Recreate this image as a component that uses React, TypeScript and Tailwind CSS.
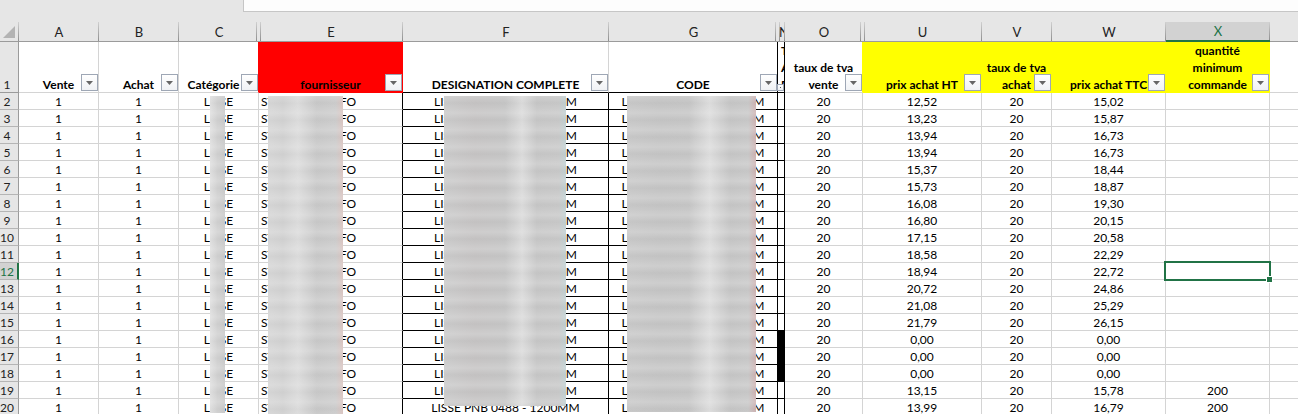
import clsx from 'clsx';

type Column = {
  letter: string;
  title?: string;
  width: string;
  head?: string;
  body?: string;
  hiddenNext?: boolean;
};

const columns: Column[] = [
  { letter: 'A', title: 'Vente', width: 'w-[80px]' },
  { letter: 'B', title: 'Achat', width: 'w-[80px]' },
  { letter: 'C', title: 'Catégorie', width: 'w-[80px]', head: 'border-r-[#ff0000] pr-[10px]', hiddenNext: true },
  { letter: 'E', title: 'fournisseur', width: 'w-[144px]', head: 'bg-[#ff0000] border-[#ff0000]', body: 'border-r-black' },
  { letter: 'F', title: 'DESIGNATION COMPLETE', width: 'w-[206px]', head: 'border-b-black', body: 'border-black' },
  { letter: 'G', title: 'CODE', width: 'w-[169px]', head: 'border-black', body: 'border-black', hiddenNext: true },
  { letter: 'N', title: 'T\nA\nD', width: 'w-[7px]', head: 'border-black', body: 'border-black' },
  { letter: 'O', title: 'taux de tva\nvente', width: 'w-[78px]', head: 'border-r-[#ffff00]', hiddenNext: true },
  { letter: 'U', title: 'prix achat HT', width: 'w-[119px]', head: 'bg-[#ffff00] border-[#ffff00]' },
  { letter: 'V', title: 'taux de tva\nachat', width: 'w-[70px]', head: 'bg-[#ffff00] border-[#ffff00]' },
  { letter: 'W', title: 'prix achat TTC', width: 'w-[114px]', head: 'bg-[#ffff00] border-[#ffff00]' },
  { letter: 'X', title: 'quantité\nminimum\ncommande', width: 'w-[104px]', head: 'bg-[#ffff00] border-[#ffff00]' },
  { letter: '', width: 'w-auto', head: 'border-r-0', body: 'border-r-0' },
];

const prices = [
  { ht: '12,52', ttc: '15,02' },
  { ht: '13,23', ttc: '15,87' },
  { ht: '13,94', ttc: '16,73' },
  { ht: '13,94', ttc: '16,73' },
  { ht: '15,37', ttc: '18,44' },
  { ht: '15,73', ttc: '18,87' },
  { ht: '16,08', ttc: '19,30' },
  { ht: '16,80', ttc: '20,15' },
  { ht: '17,15', ttc: '20,58' },
  { ht: '18,58', ttc: '22,29' },
  { ht: '18,94', ttc: '22,72' },
  { ht: '20,72', ttc: '24,86' },
  { ht: '21,08', ttc: '25,29' },
  { ht: '21,79', ttc: '26,15' },
  { ht: '0,00', ttc: '0,00' },
  { ht: '0,00', ttc: '0,00' },
  { ht: '0,00', ttc: '0,00' },
  { ht: '13,15', ttc: '15,78', min: '200' },
  { ht: '13,99', ttc: '16,79', min: '200', name: 'LISSE PNB 0488 - 1200MM' },
];

// smudge drawn over the private part of a column, starting in its first row
const masks: Record<string, string> = {
  C: 'left-[31px] w-[15px] h-[317px] bg-[linear-gradient(to_right,#dedede,#cecece_50%,#c6c6c6)]',
  E: 'left-[9px] w-[75px] h-[318px] bg-[linear-gradient(to_right,#d4d4d4,#cfcfcf_20%,#dadada_40%,#c6c6c6_65%,#cacaca_90%,#d8c2be)]',
  F: 'left-[41px] w-[122px] h-[310px] bg-[linear-gradient(to_right,#c8c8c8,#c3c1c1_25%,#c3c3c3_50%,#d9d9d9_64%,#c4c4c4_76%,#c6c6c6_94%,#bccdcf)]',
  G: 'left-[18px] w-[129px] h-[316px] bg-[linear-gradient(to_right,#c6c6c6,#c2c2c2_25%,#c3c3c3_48%,#dbdbdb_64%,#c3c3c3_80%,#c6c6c6_94%,#cbaeae)]',
};

function Mask({ letter }: { letter: string }) {
  return (
    <div className={clsx('absolute top-[3px] z-10', masks[letter])}>
      <div className="h-full bg-[repeating-linear-gradient(to_bottom,rgba(255,255,255,0.2)_0px,rgba(255,255,255,0)_7px,rgba(255,255,255,0.2)_17px)]" />
    </div>
  );
}

function FilterButton({ label, small }: { label: string; small?: boolean }) {
  return (
    <button
      type="button"
      aria-label={`Filtrer ${label}`}
      className={clsx(
        'absolute right-0 bottom-px flex items-center justify-center border border-[#9ea7b5] bg-linear-to-b from-white to-[#f0f2f5]',
        small ? 'size-[7px]' : 'size-[17px]',
      )}
    >
      {small ? (
        <span className="size-px bg-[#555]" />
      ) : (
        <svg width="7" height="4" viewBox="0 0 7 4">
          <path d="M0 0h7L3.5 4z" fill="#666" />
        </svg>
      )}
    </button>
  );
}

function Separator({ className }: { className: string }) {
  return <span className={clsx('absolute inset-y-0 w-px bg-linear-to-b from-[#d0d0d0] to-[#8f8f8f]', className)} />;
}

function cellContent(letter: string, row: (typeof prices)[number]) {
  switch (letter) {
    case 'A':
    case 'B':
      return '1';
    case 'C':
      return 'LISSE';
    case 'E':
      return (
        <span className="ml-[2px] flex w-[95px] justify-between">
          <span>ST</span>
          <span>FO</span>
        </span>
      );
    case 'F':
      return (
        row.name ?? (
          <span className="mx-auto flex w-[143px] justify-between">
            <span>LIS</span>
            <span>M</span>
          </span>
        )
      );
    case 'G':
      return (
        <span className="mx-auto flex w-[143px] justify-between">
          <span>L</span>
          <span>M</span>
        </span>
      );
    case 'O':
    case 'V':
      return '20';
    case 'U':
      return row.ht;
    case 'W':
      return row.ttc;
    case 'X':
      return row.min;
    default:
      return null;
  }
}

export default function App() {
  return (
    <div className="h-screen overflow-hidden bg-white font-['Lato',sans-serif] text-[12px] text-black">
      <div className="flex h-[22px] items-start bg-[#e6e6e6] pl-[243px]">
        <input
          aria-label="Barre de formule"
          className="h-3 min-w-0 flex-1 border-b border-l border-[#c6c6c6] bg-[#fdfdfd] outline-none"
        />
      </div>

      <table className="w-full table-fixed border-separate border-spacing-0">
        <colgroup>
          <col className="w-[19px]" />
          {columns.map((col) => (
            <col key={col.letter} className={col.width} />
          ))}
        </colgroup>
        <thead>
          <tr className="h-5 bg-[#e6e6e6]">
            <th className="relative border-b border-[#9b9b9b] p-0">
              <svg className="ml-[3px]" width="12" height="12" viewBox="0 0 12 12">
                <path d="M12 0v12H0z" fill="#b3b3b3" />
              </svg>
              <Separator className="right-0" />
            </th>
            {columns.map((col) => (
              <th
                key={col.letter}
                scope="col"
                className={clsx(
                  'relative p-0 text-[13px] leading-[18px] font-normal',
                  col.letter === 'X'
                    ? 'border-b-2 border-[#217346] bg-[#d2d2d2] text-[#217346]'
                    : 'border-b border-[#9b9b9b] text-[#222]',
                )}
              >
                <span className={clsx('block overflow-hidden', col.letter === 'N' && 'pl-px')}>{col.letter}</span>
                {col.letter !== '' && <Separator className={col.hiddenNext ? 'right-[2px]' : 'right-0'} />}
                {col.hiddenNext && <Separator className="-right-[2px]" />}
              </th>
            ))}
          </tr>
        </thead>
        <tbody>
          <tr className="h-[51px]">
            <th scope="row" className="border-r border-b border-[#9b9b9b] bg-[#e6e6e6] p-0 align-bottom leading-[15px] font-normal">
              <span className="flex justify-center pr-1 text-[#222]">1</span>
            </th>
            {columns.map((col) => (
              <th
                key={col.letter}
                className={clsx('relative border-r border-b border-[#d4d4d4] p-0 align-bottom leading-[17px] font-bold', col.head)}
              >
                {col.title && (
                  <>
                    <span
                      className={clsx(
                        '-mb-px block whitespace-pre',
                        col.letter === 'N' && 'overflow-hidden pl-[3px] text-left',
                      )}
                    >
                      {col.title}
                    </span>
                    <FilterButton label={col.title} small={col.letter === 'N'} />
                  </>
                )}
              </th>
            ))}
          </tr>

          {prices.map((row, idx) => {
            const num = idx + 2;
            const active = num === 12;
            return (
              <tr key={num} className="h-[17px]">
                <th
                  scope="row"
                  className={clsx(
                    'border-b border-b-[#b5b5b5] p-0 pt-px leading-[15px] font-normal',
                    active ? 'border-r-2 border-r-[#217346] bg-[#d2d2d2] text-[#217346]' : 'border-r border-r-[#9b9b9b] bg-[#e6e6e6] text-[#222]',
                  )}
                >
                  <span className={clsx('flex justify-center', active ? 'pr-[3px]' : 'pr-1')}>{num}</span>
                </th>
                {columns.map((col) => (
                  <td
                    key={col.letter}
                    className={clsx(
                      'relative border-r border-b border-[#d4d4d4] p-0 pt-px text-center leading-[15px] whitespace-nowrap',
                      col.body,
                      col.letter === 'N' && num >= 16 && num <= 18 && 'bg-black',
                    )}
                  >
                    {cellContent(col.letter, row)}
                    {idx === 0 && masks[col.letter] && <Mask letter={col.letter} />}
                    {active && col.letter === 'X' && (
                      <div className="absolute -inset-[2px] z-10 border-2 border-[#217346]">
                        <span className="absolute -right-[4px] -bottom-[4px] size-[7px] border border-white bg-[#217346]" />
                      </div>
                    )}
                  </td>
                ))}
              </tr>
            );
          })}
        </tbody>
      </table>
    </div>
  );
}
